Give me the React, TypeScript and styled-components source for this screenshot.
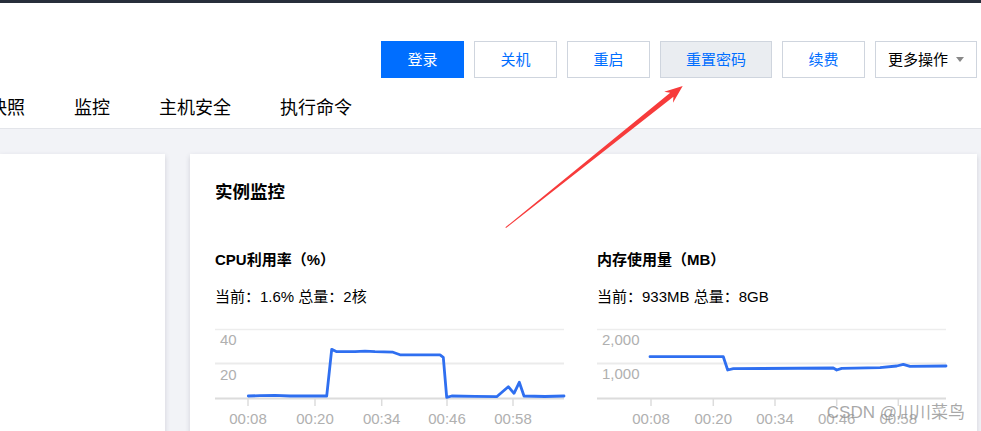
import React from 'react';
import styled, { createGlobalStyle } from 'styled-components';

const GlobalStyle = createGlobalStyle`
  html, body {
    margin: 0;
    padding: 0;
    background: #f2f3f7;
    overflow: hidden;
  }
  body {
    font-family: "Liberation Sans", "Noto Sans CJK SC", sans-serif;
    color: #000;
  }
  * {
    box-sizing: border-box;
  }
`;

const Page = styled.div`
  position: relative;
  width: 981px;
  height: 431px;
  overflow: hidden;
`;

const TopBar = styled.div`
  height: 3px;
  background: #272e3b;
`;

const Header = styled.header`
  background: #fff;
  border-bottom: 1px solid #e3e5ea;
`;

const Actions = styled.div`
  display: flex;
  justify-content: flex-end;
  gap: 10px;
  padding: 38px 4px 0 0;
`;

interface ButtonProps {
  variant?: 'primary' | 'default' | 'active';
  dark?: boolean;
  wide?: boolean;
}

const Button = styled.button<ButtonProps>`
  display: flex;
  align-items: center;
  justify-content: center;
  gap: 8px;
  height: 37px;
  padding: 0 ${p => (p.wide ? '25px' : '25.5px')};
  font-family: inherit;
  font-size: 15px;
  line-height: 20px;
  border: 1px solid ${p => (p.variant === 'primary' ? '#006eff' : '#cfd5de')};
  background: ${p =>
    p.variant === 'primary' ? '#006eff' : p.variant === 'active' ? '#eaedf1' : '#fff'};
  color: ${p => (p.variant === 'primary' ? '#fff' : p.dark ? '#000' : '#006eff')};
  cursor: pointer;
`;

const DropButton = styled(Button)`
  padding: 0 12px 0 12px;
`;

const Caret = styled.span`
  width: 0;
  height: 0;
  border-left: 4.5px solid transparent;
  border-right: 4.5px solid transparent;
  border-top: 5px solid #888;
`;

const Tabs = styled.nav`
  display: flex;
  gap: 49px;
  margin-left: -11px;
  padding: 18px 0 8px;
`;

const Tab = styled.span`
  font-size: 18px;
  line-height: 24px;
  color: #000;
  white-space: nowrap;
`;

const Content = styled.main`
  display: grid;
  grid-template-columns: 165px 1fr;
  column-gap: 25px;
  padding: 25px 4px 0 0;
`;

const Card = styled.section`
  background: #fff;
  min-height: 320px;
  box-shadow: 0 2px 5px rgba(54, 58, 80, 0.18);
`;

const MonitorCard = styled(Card)`
  padding: 26px 25px 0;
`;

const CardTitle = styled.h2`
  margin: 0;
  font-size: 17.5px;
  line-height: 24px;
  font-weight: 700;
`;

const ChartsGrid = styled.div`
  display: grid;
  grid-template-columns: 1fr 1fr;
  column-gap: 27px;
  margin-top: 45px;
`;

const ChartBlock = styled.div`
  position: relative;
`;

const ChartTitle = styled.h3`
  margin: 0;
  font-size: 15px;
  line-height: 22px;
  font-weight: 700;
`;

const Stats = styled.div`
  margin-top: 16px;
  font-size: 15px;
  line-height: 20px;
  color: #000;
`;

const ChartSvg = styled.svg`
  display: block;
  margin-top: 13px;
  overflow: visible;
`;

const Watermark = styled.div`
  position: absolute;
  right: -13px;
  top: 154px;
  font-size: 17px;
  line-height: 20px;
  color: rgba(140, 140, 140, 0.75);
  white-space: nowrap;
`;

const ArrowLayer = styled.svg`
  position: absolute;
  left: 0;
  top: 0;
  pointer-events: none;
`;

interface ChartProps {
  yLabels: { text: string; y: number }[];
  ticks: number[];
  tickLabels: string[];
  points: number[][];
}

function LineChart({ yLabels, ticks, tickLabels, points }: ChartProps) {
  return (
    <ChartSvg width={350} height={110} viewBox="0 0 350 110">
      <line x1={0} x2={349} y1={9.5} y2={9.5} stroke="#ededed" strokeWidth={1.5} />
      <line x1={0} x2={349} y1={43.5} y2={43.5} stroke="#ebebeb" strokeWidth={2} />
      <line x1={0} x2={349} y1={78.5} y2={78.5} stroke="#dcdcdc" strokeWidth={2} />
      {yLabels.map(l => (
        <text
          key={l.text}
          x={5}
          y={l.y}
          fontSize={15}
          fill="#b0b0b0"
          fontFamily="Liberation Sans, sans-serif"
        >
          {l.text}
        </text>
      ))}
      {ticks.map((t, i) => (
        <g key={t}>
          <line x1={t} x2={t} y1={79} y2={86} stroke="#dcdcdc" strokeWidth={1.5} />
          <text
            x={t}
            y={103.5}
            fontSize={15}
            fill="#b0b0b0"
            textAnchor="middle"
            fontFamily="Liberation Sans, sans-serif"
          >
            {tickLabels[i]}
          </text>
        </g>
      ))}
      <polyline
        points={points.map(p => p.join(',')).join(' ')}
        fill="none"
        stroke="#2f6ff0"
        strokeWidth={2.8}
        strokeLinejoin="round"
        strokeLinecap="round"
      />
    </ChartSvg>
  );
}

const cpuPoints = [
  [33.3, 76], [45, 75.6], [60, 75.3], [75, 76], [90, 75.8], [111.7, 76],
  [116.7, 29.3], [121.7, 31.7], [140, 31.7], [150, 31.2], [160, 31.7], [178, 32.2],
  [185, 34.8], [225, 34.8], [228.3, 37.3], [231.7, 77.3], [236.7, 76],
  [260, 76.3], [281.7, 76.7], [293.3, 66.7], [299, 73.3], [304.3, 62.3], [309, 76],
  [330, 76.5], [349, 76],
];

const memPoints = [
  [53, 36.7], [126.3, 36.7], [130.7, 50], [136.3, 48.7], [236.3, 48],
  [239.7, 50], [244.7, 48.3], [283, 47.7], [299.7, 46], [306.3, 44.3],
  [313, 46.3], [349, 46],
];

const tickLabels = ['00:08', '00:20', '00:34', '00:46', '00:58'];

export default function App(): JSX.Element {
  return (
    <Page>
      <GlobalStyle />
      <TopBar />
      <Header>
        <Actions>
          <Button variant="primary">登录</Button>
          <Button>关机</Button>
          <Button>重启</Button>
          <Button variant="active" wide>
            重置密码
          </Button>
          <Button>续费</Button>
          <DropButton dark>
            更多操作
            <Caret />
          </DropButton>
        </Actions>
        <Tabs>
          <Tab>快照</Tab>
          <Tab>监控</Tab>
          <Tab>主机安全</Tab>
          <Tab>执行命令</Tab>
        </Tabs>
      </Header>

      <Content>
        <Card />
        <MonitorCard>
          <CardTitle>实例监控</CardTitle>
          <ChartsGrid>
            <ChartBlock>
              <ChartTitle>CPU利用率（%）</ChartTitle>
              <Stats>当前：1.6% 总量：2核</Stats>
              <LineChart
                yLabels={[
                  { text: '40', y: 24.5 },
                  { text: '20', y: 59.5 },
                ]}
                ticks={[33, 100, 166.7, 232, 298]}
                tickLabels={tickLabels}
                points={cpuPoints}
              />
            </ChartBlock>
            <ChartBlock>
              <ChartTitle>内存使用量（MB）</ChartTitle>
              <Stats>当前：933MB 总量：8GB</Stats>
              <LineChart
                yLabels={[
                  { text: '2,000', y: 24.5 },
                  { text: '1,000', y: 58.5 },
                ]}
                ticks={[54, 116.3, 178, 239.7, 301.3]}
                tickLabels={tickLabels}
                points={memPoints}
              />
              <Watermark>CSDN @川川菜鸟</Watermark>
            </ChartBlock>
          </ChartsGrid>
        </MonitorCard>
      </Content>

      <ArrowLayer width={981} height={431} viewBox="0 0 981 431">
        <polygon
          points="682.7,86 664.2,91.8 670.2,92.8 505.4,227.3 506,228.1 673.4,96.7 673,102.7"
          fill="#f73b3b"
        />
      </ArrowLayer>
    </Page>
  );
}
